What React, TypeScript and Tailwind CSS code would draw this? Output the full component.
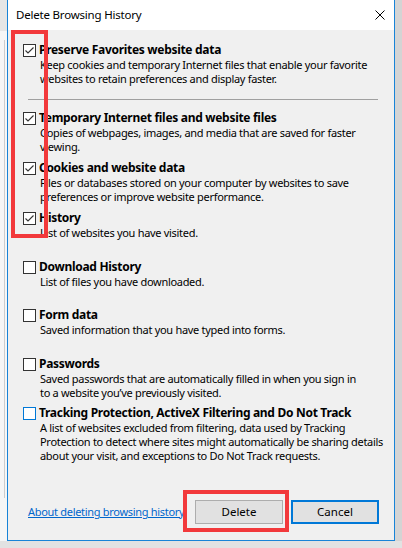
import React from "react";

const FONT = { fontFamily: '"Noto Sans", "Open Sans", sans-serif' };

function Check({ checked, focus }: { checked?: boolean; focus?: boolean }) {
  return (
    <div
      className={`w-[13px] h-[13px] border bg-white shrink-0 flex items-center justify-center ${
        focus ? "border-[#0078d7]" : "border-[#333333]"
      }`}
    >
      {checked && (
        <svg width="11" height="11" viewBox="0 0 11 11">
          <path d="M1.5 5.5 L4 8 L9.5 2.5" stroke="#333333" strokeWidth="1.1" fill="none" />
        </svg>
      )}
    </div>
  );
}

function Section({
  className,
  title,
  lines,
  checked,
  focus,
}: {
  className: string;
  title: string;
  lines: string[];
  checked?: boolean;
  focus?: boolean;
}) {
  return (
    <div className={className}>
      <div className="flex items-center h-4 pl-[15px]">
        <Check checked={checked} focus={focus} />
        <span className="ml-[3px] font-bold text-[12px] tracking-[-0.3px] text-black leading-4 whitespace-nowrap">
          {title}
        </span>
      </div>
      <div className="pl-[32px] text-[11px] tracking-[-0.3px] leading-[14px] text-black">
        {lines.map((l, i) => (
          <div key={i} className="whitespace-nowrap">
            {l}
          </div>
        ))}
      </div>
    </div>
  );
}

export default function App() {
  return (
    <div className="relative w-[402px] h-[548px] overflow-hidden bg-[#f0f0f0] flex flex-col" style={FONT}>
      <div className="flex h-[541px]">
        <div className="w-[7px] flex flex-col">
          <div className="h-[31px] bg-[#e6e6e6]" />
          <div className="flex-1 bg-[#f6f6f6]">
            <div className="ml-[4px] mt-[9px] w-px h-[458px] bg-[#cdcdcd]" />
          </div>
        </div>
        <div className="w-[388px] h-[541px] border-l border-r border-b border-[#1883d7] flex flex-col bg-[#f0f0f0]">
          <div className="h-[30px] bg-white flex items-center justify-between pl-[8px] pr-[9px]">
            <span className="text-[11.5px] tracking-[-0.2px] text-black leading-4">Delete Browsing History</span>
            <svg width="10" height="10" viewBox="0 0 10 10">
              <path d="M0.5 0.5 L9.5 9.5 M9.5 0.5 L0.5 9.5" stroke="#000" strokeWidth="1" />
            </svg>
          </div>
          <div className="flex-1 flex flex-col pt-[12px]">
            <Section
              className=""
              checked
              title="Preserve Favorites website data"
              lines={[
                "Keep cookies and temporary Internet files that enable your favorite",
                "websites to retain preferences and display faster.",
              ]}
            />
            <div className="mt-[13px] ml-[20px] mr-[16px] h-px bg-[#a0a0a0]" />
            <Section
              className="mt-[10px]"
              checked
              title="Temporary Internet files and website files"
              lines={["Copies of webpages, images, and media that are saved for faster", "viewing."]}
            />
            <Section
              className="mt-[6px]"
              checked
              title="Cookies and website data"
              lines={[
                "Files or databases stored on your computer by websites to save",
                "preferences or improve website performance.",
              ]}
            />
            <Section
              className="mt-[6px]"
              checked
              title="History"
              lines={["List of websites you have visited."]}
            />
            <Section
              className="mt-[19px]"
              title="Download History"
              lines={["List of files you have downloaded."]}
            />
            <Section
              className="mt-[18px]"
              title="Form data"
              lines={["Saved information that you have typed into forms."]}
            />
            <Section
              className="mt-[19px]"
              title="Passwords"
              lines={[
                "Saved passwords that are automatically filled in when you sign in",
                "to a website you\u2019ve previously visited.",
              ]}
            />
            <Section
              className="mt-[5px]"
              focus
              title="Tracking Protection, ActiveX Filtering and Do Not Track"
              lines={[
                "A list of websites excluded from filtering, data used by Tracking",
                "Protection to detect where sites might automatically be sharing details",
                "about your visit, and exceptions to Do Not Track requests.",
              ]}
            />
            <div className="mt-[37px] flex items-center pl-[20px] pr-[15px]">
              <a className="text-[11px] tracking-[-0.3px] text-[#0066cc] underline leading-4 whitespace-nowrap">
                About deleting browsing history
              </a>
              <div className="flex-1" />
              <button className="w-[88px] h-[24px] bg-[#e1e1e1] border border-[#adadad] text-[11.5px] text-black">
                Delete
              </button>
              <button className="ml-[8px] w-[88px] h-[24px] bg-[#e1e1e1] border-2 border-[#0078d7] text-[11.5px] text-black">
                Cancel
              </button>
            </div>
          </div>
        </div>
        <div className="w-[7px] bg-[#d4d4d4]" />
      </div>
      <div className="h-[7px] bg-[#e2e2e2]" />

      <div className="absolute left-[11px] top-[30px] w-[37px] h-[208px] border-4 border-[#f2393b]" />
      <div className="absolute left-[183px] top-[490px] w-[106px] h-[42px] border-4 border-[#f2393b]" />
    </div>
  );
}
